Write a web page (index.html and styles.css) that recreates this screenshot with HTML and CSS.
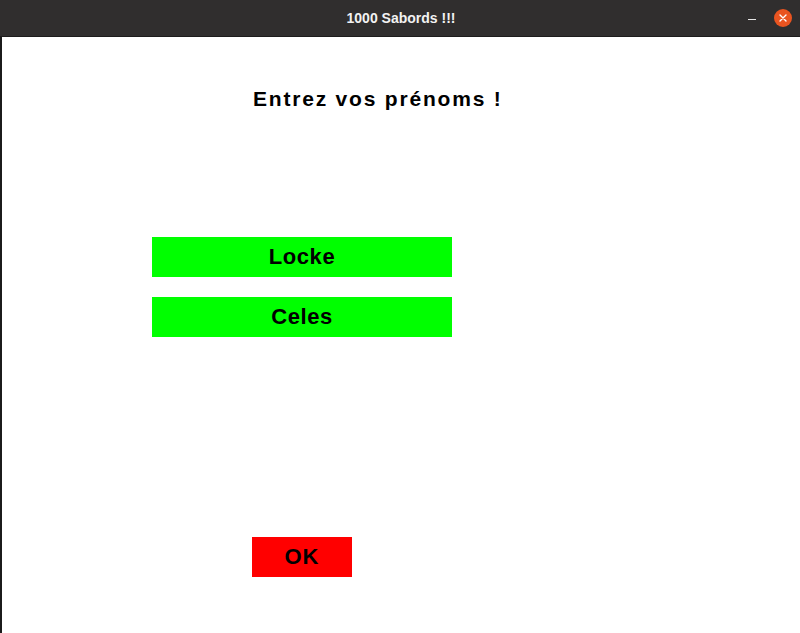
FILE: index.html
```html
<!DOCTYPE html>
<html lang="fr">
<head>
<meta charset="utf-8">
<title>1000 Sabords !!!</title>
<link rel="stylesheet" href="styles.css">
</head>
<body>
<div class="window">
  <header class="titlebar">
    <span class="title">1000 Sabords !!!</span>
    <div class="controls">
      <span class="minimize"></span>
      <span class="close">
        <svg width="18" height="18" viewBox="0 0 18 18"><path d="M6 6 L12 12 M12 6 L6 12" stroke="#fff" stroke-width="1.4" stroke-linecap="round"/></svg>
      </span>
    </div>
  </header>
  <div class="body">
    <div class="edge"></div>
    <main class="content">
      <h1 class="heading">Entrez vos prénoms !</h1>
      <div class="names">
        <div class="name">Locke</div>
        <div class="name">Celes</div>
      </div>
      <div class="ok">OK</div>
    </main>
  </div>
</div>
</body>
</html>
```
FILE: styles.css
```css
html, body {
  margin: 0;
  padding: 0;
  background: #fff;
}
.window {
  width: 800px;
  height: 633px;
  display: flex;
  flex-direction: column;
  overflow: hidden;
}
.titlebar {
  height: 36px;
  background: #302e2e;
  border-bottom: 1px solid #1d1c1c;
  display: flex;
  align-items: center;
  justify-content: center;
  position: relative;
  flex-shrink: 0;
}
.title {
  color: #f2f2f2;
  font-family: "Liberation Sans", Arial, sans-serif;
  font-weight: bold;
  font-size: 14px;
  margin-left: 2px;
}
.controls {
  position: absolute;
  right: 8px;
  top: 9px;
  display: flex;
  align-items: center;
  gap: 18px;
}
.minimize {
  width: 8px;
  height: 1.5px;
  background: #e6e6e6;
  margin-top: 3px;
}
.close {
  width: 18px;
  height: 18px;
  border-radius: 50%;
  background: #e95420;
  display: flex;
}
.body {
  flex: 1;
  display: flex;
}
.edge {
  width: 2px;
  background: #1b1b1b;
}
.content {
  flex: 1;
  display: flex;
  flex-direction: column;
  font-family: "Liberation Sans", Arial, sans-serif;
  font-weight: bold;
  color: #000;
}
.heading {
  margin: 50px 0 0 251px;
  font-size: 21px;
  letter-spacing: 1.8px;
  line-height: 24px;
  font-weight: bold;
}
.names {
  margin: 126px 0 0 150px;
  display: flex;
  flex-direction: column;
  gap: 20px;
}
.name {
  width: 300px;
  height: 40px;
  background: #00ff00;
  display: flex;
  align-items: center;
  justify-content: center;
  font-size: 22px;
  letter-spacing: 0.6px;
}
.ok {
  margin: 200px 0 0 250px;
  width: 100px;
  height: 40px;
  background: #ff0000;
  display: flex;
  align-items: center;
  justify-content: center;
  font-size: 22px;
  letter-spacing: 1px;
}
```
